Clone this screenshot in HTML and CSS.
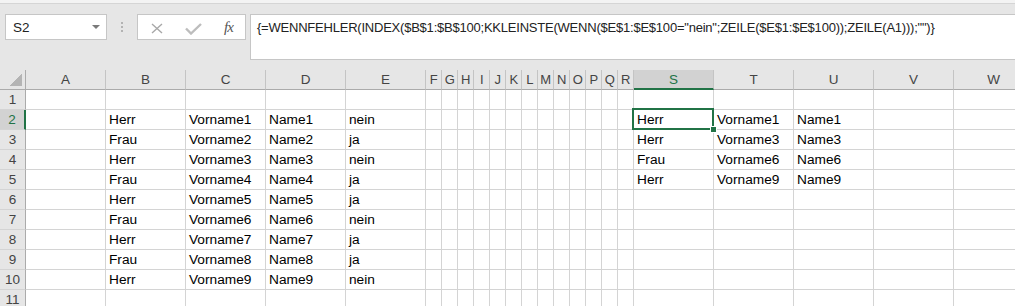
FILE: index.html
```html
<!DOCTYPE html>
<html lang="de">
<head>
    <meta charset="UTF-8">
    <title>Tabelle</title>
    <link rel="stylesheet" href="styles.css">
</head>
<body>
    <div class="ribbon-edge"></div>
    <div class="formula-bar">
        <div class="name-box">
            <span>S2</span>
            <span class="caret"></span>
        </div>
        <div class="grip"><span></span><span></span><span></span></div>
        <div class="fx-buttons">
            <svg class="btn-cancel" width="12" height="11" viewBox="0 0 12 11">
                <path d="M1 1 L11 10 M11 1 L1 10" stroke="#a8a8a8" stroke-width="1.4" fill="none"/>
            </svg>
            <svg class="btn-enter" width="17" height="12" viewBox="0 0 17 12">
                <path d="M1 5.5 L6 10.5 L16 1" stroke="#bdbdbd" stroke-width="2.4" fill="none"/>
            </svg>
            <span class="fx">fx</span>
        </div>
        <div class="formula">{=WENNFEHLER(INDEX($B$1:$B$100;KKLEINSTE(WENN($E$1:$E$100="nein";ZEILE($E$1:$E$100));ZEILE(A1)));"")}</div>
    </div>
    <div class="sheet" id="sheet"></div>

    <script>
        const columns = 'ABCDEFGHIJKLMNOPQRSTUVW'.split('');
        const narrow = 'FGHIJKLMNOPQR';
        const data = {
            2: { B: 'Herr', C: 'Vorname1', D: 'Name1', E: 'nein', S: 'Herr', T: 'Vorname1', U: 'Name1' },
            3: { B: 'Frau', C: 'Vorname2', D: 'Name2', E: 'ja', S: 'Herr', T: 'Vorname3', U: 'Name3' },
            4: { B: 'Herr', C: 'Vorname3', D: 'Name3', E: 'nein', S: 'Frau', T: 'Vorname6', U: 'Name6' },
            5: { B: 'Frau', C: 'Vorname4', D: 'Name4', E: 'ja', S: 'Herr', T: 'Vorname9', U: 'Name9' },
            6: { B: 'Herr', C: 'Vorname5', D: 'Name5', E: 'ja' },
            7: { B: 'Frau', C: 'Vorname6', D: 'Name6', E: 'nein' },
            8: { B: 'Herr', C: 'Vorname7', D: 'Name7', E: 'ja' },
            9: { B: 'Frau', C: 'Vorname8', D: 'Name8', E: 'ja' },
            10: { B: 'Herr', C: 'Vorname9', D: 'Name9', E: 'nein' }
        };
        const activeCol = 'S';
        const activeRow = 2;
        const sheet = document.getElementById('sheet');

        function addCell(className, text) {
            const el = document.createElement('div');
            el.className = className;
            el.textContent = text || '';
            sheet.appendChild(el);
            return el;
        }

        // header row
        addCell('corner');
        columns.forEach(col => {
            let cls = 'col-head';
            if (narrow.includes(col)) cls += ' narrow';
            if (col === activeCol) cls += ' active';
            addCell(cls, col);
        });

        // rows 1 - 11
        for (let r = 1; r <= 11; r++) {
            addCell(r === activeRow ? 'row-head active' : 'row-head', r);
            columns.forEach(col => {
                const value = data[r] ? data[r][col] : '';
                let cls = 'cell';
                if (col === activeCol && r === activeRow) cls += ' selected';
                addCell(cls, value);
            });
        }
    </script>
</body>
</html>
```

FILE: styles.css
```css
body {
    margin: 0;
    background-color: #e6e6e6;
    font-family: "Liberation Sans", Arial, sans-serif;
    color: #1e1e1e;
    height: 306px;
    overflow: hidden;
}
.ribbon-edge {
    height: 3px;
    background-color: #f3f3f3;
    border-bottom: 1px solid #d5d5d5;
}
.formula-bar {
    display: flex;
    align-items: flex-start;
    padding: 10px 0 0 5px;
    height: 46px;
}
.name-box {
    box-sizing: border-box;
    width: 102px;
    height: 26px;
    background-color: #fff;
    border: 1px solid #c6c6c6;
    display: flex;
    align-items: center;
    justify-content: space-between;
    padding: 0 6px 0 7px;
    font-size: 13.5px;
    color: #222;
}
.caret {
    width: 0;
    height: 0;
    border-left: 4px solid transparent;
    border-right: 4px solid transparent;
    border-top: 4px solid #7a7a7a;
}
.grip {
    width: 30px;
    height: 26px;
    display: flex;
    flex-direction: column;
    align-items: center;
    justify-content: center;
    gap: 2px;
}
.grip span {
    width: 2px;
    height: 2px;
    background-color: #b3b3b3;
}
.fx-buttons {
    box-sizing: border-box;
    width: 109px;
    height: 26px;
    background-color: #fff;
    border: 1px solid #c6c6c6;
    display: flex;
    align-items: center;
    padding-left: 13px;
}
.btn-cancel {
    margin-top: 2px;
}
.btn-enter {
    margin-left: 22px;
    margin-top: 3px;
}
.fx {
    margin-left: 22px;
    font-family: "Liberation Serif", "Times New Roman", serif;
    font-style: italic;
    font-size: 15px;
    color: #555;
    letter-spacing: -1px;
}
.formula {
    box-sizing: border-box;
    margin-left: 4px;
    flex: 1;
    height: 46px;
    background-color: #fff;
    border: 1px solid #c6c6c6;
    border-right: none;
    padding: 5px 0 0 6px;
    font-size: 13px;
    letter-spacing: -0.22px;
    color: #222;
    white-space: nowrap;
    overflow: hidden;
}
.sheet {
    margin-top: 10px;
    display: grid;
    grid-template-columns: 26px repeat(5, 80px) repeat(13, 16px) repeat(5, 80px);
    grid-auto-rows: 20px;
    width: 1033px;
}
.corner {
    box-sizing: border-box;
    border-right: 1px solid #ababab;
    border-bottom: 1px solid #ababab;
    display: flex;
    justify-content: flex-end;
    align-items: flex-end;
    padding: 0 3px 3px 0;
}
.corner::before {
    content: "";
    width: 12px;
    height: 12px;
    background: linear-gradient(to bottom right, transparent 50%, #b4b4b4 50%);
}
.col-head {
    box-sizing: border-box;
    border-right: 1px solid #c4c4c4;
    border-bottom: 1px solid #ababab;
    text-align: center;
    font-size: 13.5px;
    line-height: 19px;
    color: #444;
    overflow: hidden;
}
.col-head.narrow {
    font-size: 13px;
    letter-spacing: -0.5px;
}
.col-head.active {
    background-color: #d2d2d2;
    color: #217346;
    border-bottom: 2px solid #217346;
}
.row-head {
    box-sizing: border-box;
    border-right: 1px solid #ababab;
    border-bottom: 1px solid #d4d4d4;
    text-align: center;
    font-size: 13.5px;
    line-height: 19px;
    color: #444;
}
.row-head.active {
    background-color: #d2d2d2;
    color: #217346;
    border-right: 2px solid #217346;
}
.cell {
    box-sizing: border-box;
    background-color: #fff;
    border-right: 1px solid #d4d4d4;
    border-bottom: 1px solid #d4d4d4;
    padding: 1px 3px 0;
    font-size: 13.7px;
    line-height: 18px;
    white-space: nowrap;
    color: #000;
}
.cell.selected {
    position: relative;
    z-index: 1;
}
.cell.selected::before {
    content: "";
    position: absolute;
    top: -2px;
    left: -2px;
    right: -1px;
    bottom: -1px;
    border: 2px solid #217346;
}
.cell.selected::after {
    content: "";
    position: absolute;
    right: -4px;
    bottom: -4px;
    width: 5px;
    height: 5px;
    background-color: #217346;
    border: 1px solid #fff;
}
```
